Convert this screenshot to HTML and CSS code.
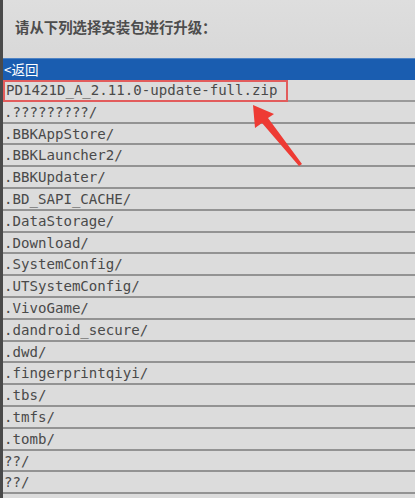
FILE: index.html
```html
<!DOCTYPE html>
<html>
<head>
  <meta name="viewport" content="width=device-width, initial-scale=1.0">
  <title>Recovery</title>
  <link rel="stylesheet" href="styles.css">
</head>
<body>
  <div class="screen">
    <div class="prompt">请从下列选择安装包进行升级：</div>
    <div class="back">&lt;返回</div>
    <ul class="files">
      <li class="picked">PD1421D_A_2.11.0-update-full.zip</li>
      <li>.?????????/</li>
      <li>.BBKAppStore/</li>
      <li>.BBKLauncher2/</li>
      <li>.BBKUpdater/</li>
      <li>.BD_SAPI_CACHE/</li>
      <li>.DataStorage/</li>
      <li>.Download/</li>
      <li>.SystemConfig/</li>
      <li>.UTSystemConfig/</li>
      <li>.VivoGame/</li>
      <li>.dandroid_secure/</li>
      <li>.dwd/</li>
      <li>.fingerprintqiyi/</li>
      <li>.tbs/</li>
      <li>.tmfs/</li>
      <li>.tomb/</li>
      <li>??/</li>
      <li>??/</li>
      <li>??/</li>
    </ul>

    <!-- arrow drawn over the list, pointing at the zip -->
    <svg class="arrow" width="70" height="70" viewBox="0 0 70 70">
      <polygon points="1,0 3,23 10,18 47,61 50,59 16,13 22,9" fill="#ee3b34"/>
    </svg>
  </div>
</body>
</html>
```

FILE: styles.css
```css
html, body {
  margin: 0;
  padding: 0;
  background-color: #d9d9d9;
}
.screen {
  position: relative;
  width: 415px;
  height: 498px;
  overflow: hidden;
  border-left: 3px solid #4a4a4a;
  box-sizing: border-box;
  background: linear-gradient(#dedede, #d8d8d8 60px, #dadada);
}
.prompt {
  height: 58px;
  box-sizing: border-box;
  padding: 18px 0 0 12px;
  font-family: "Noto Sans CJK SC", sans-serif;
  font-size: 14.4px;
  line-height: 18px;
  font-weight: bold;
  color: #4d4d4d;
}
.back {
  height: 22px;
  box-sizing: border-box;
  background-color: #1a5db0;
  border-top: 1px solid #4f83c4;
  padding-left: 1px;
  font-family: "Noto Sans CJK SC", sans-serif;
  font-size: 13.5px;
  line-height: 20px;
  color: #ffffff;
}
.files {
  list-style: none;
  margin: 0;
  padding: 0;
}
.files li {
  height: 19.8px;
  border-bottom: 2px solid #939393;
  padding-left: 1px;
  font-family: "DejaVu Sans Mono", monospace;
  font-size: 14.1px;
  line-height: 20px;
  color: #4a4a4a;
  background-color: #dcdcdc;
}
.files li.picked {
  position: relative;
  padding-left: 3px;
  border-bottom-color: #9a9a9a;
}
.files li.picked::after {
  content: "";
  position: absolute;
  left: 0;
  top: 0;
  width: 285px;
  height: 22px;
  box-sizing: border-box;
  border: 2px solid #e25c5c;
}
.arrow {
  position: absolute;
  left: 249px;
  top: 105px;
}
```
